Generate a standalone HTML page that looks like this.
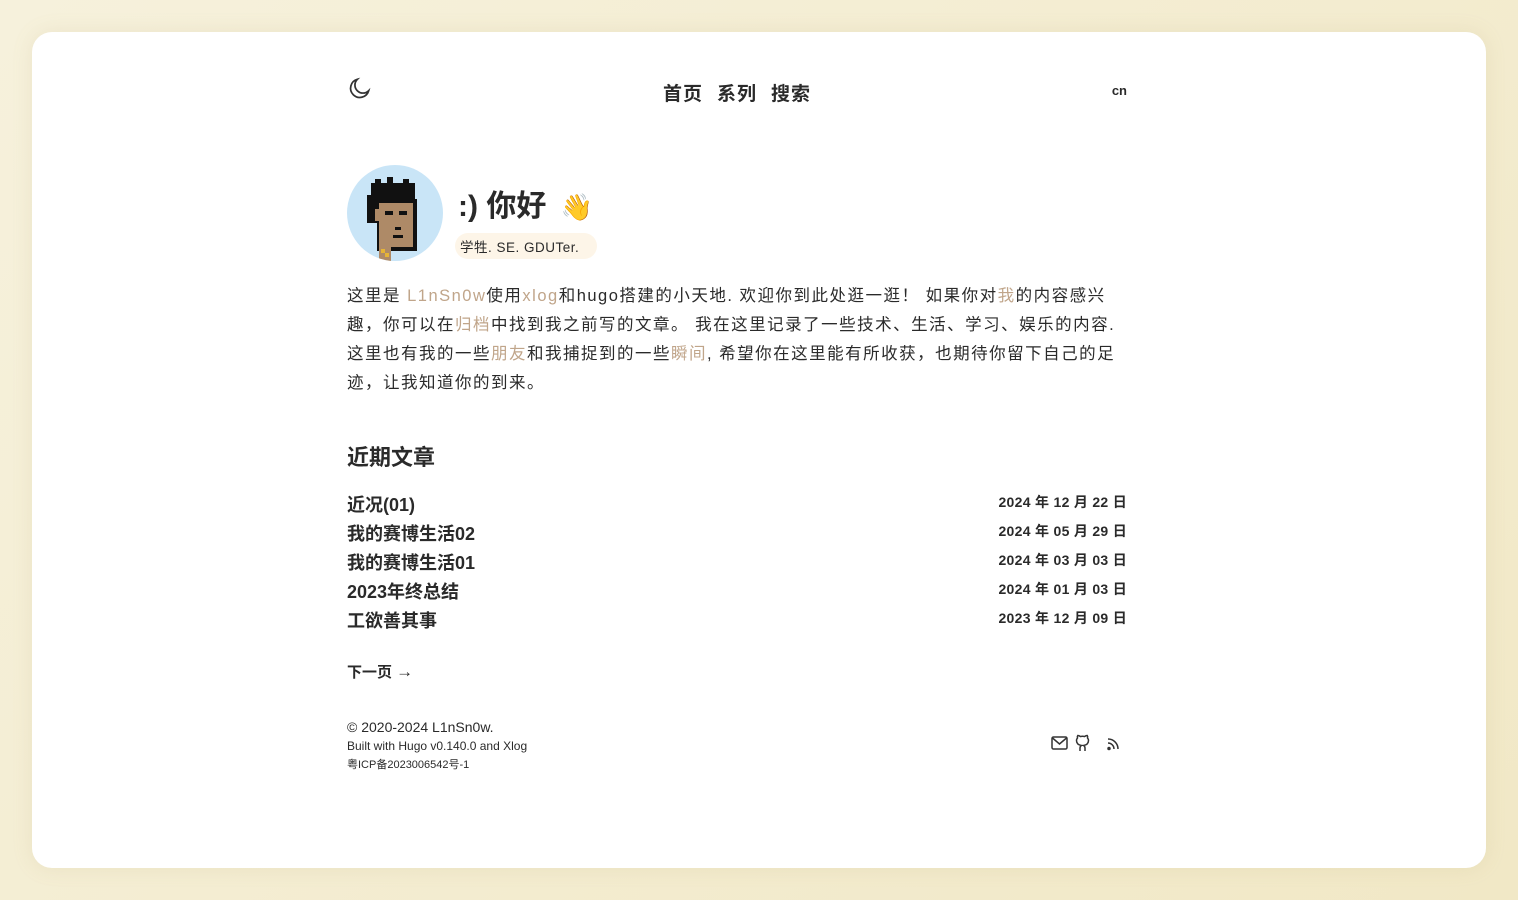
<!DOCTYPE html>
<html><head><meta charset="utf-8"><style>
*{margin:0;padding:0;box-sizing:border-box}
html,body{width:1518px;height:900px;overflow:hidden}
body{background:linear-gradient(135deg,#f6f1dc,#f1e8c6);font-family:"Liberation Sans","Noto Sans CJK SC",sans-serif;color:#2a2a2a;position:relative}
.card{position:absolute;left:32px;top:32px;width:1454px;height:836px;background:#fff;border-radius:20px;box-shadow:0 0 20px rgba(180,160,100,.15)}
.col{position:absolute;left:347px;width:780px}
a{color:#c0a58a;text-decoration:none}
.nav{top:74px;height:36px}
.nav .links{position:absolute;left:316px;top:5px;font-size:19px;font-weight:bold;letter-spacing:1px}
.nav .links span{margin-right:14px}
.cn{position:absolute;right:0;top:9px;font-size:13px;font-weight:bold}
.intro{top:282px;font-size:16.5px;line-height:29px;white-space:nowrap;letter-spacing:1.5px}
h2{position:absolute;left:347px;top:440px;font-size:22px;font-weight:bold}
.posts{top:491px}
.row{display:flex;justify-content:space-between;height:29px;font-size:18px;font-weight:bold}
.row .d{font-size:14px;letter-spacing:.3px;padding-top:1px}
.next{top:661px;font-size:15px;font-weight:bold}
.foot{top:717px;font-size:14px;line-height:20px}
.foot small{display:block;font-size:12px;line-height:19px}
</style></head><body>
<div class="card"></div>
<div class="col nav">
<svg style="position:absolute;left:0;top:1px" width="26" height="26" viewBox="0 0 24 24" fill="none" stroke="#333" stroke-width="1.6"><path d="M20 14.5A8.5 8.5 0 1 1 9.5 4a7 7 0 0 0 10.5 10.5z"/></svg>
<div class="links"><span>首页</span><span>系列</span><span>搜索</span></div>
<div class="cn">cn</div>
</div>
<svg style="position:absolute;left:347px;top:165px" width="96" height="96" viewBox="0 0 96 96">
<circle cx="48" cy="48" r="48" fill="#c9e5f7"/>
<clipPath id="c"><circle cx="48" cy="48" r="48"/></clipPath>
<g clip-path="url(#c)">
<rect x="24" y="18" width="44" height="16" fill="#111"/>
<rect x="28" y="14" width="6" height="6" fill="#111"/><rect x="40" y="12" width="6" height="8" fill="#111"/><rect x="56" y="14" width="6" height="6" fill="#111"/>
<rect x="20" y="30" width="12" height="28" fill="#111"/>
<rect x="30" y="34" width="40" height="52" fill="#111"/>
<rect x="32" y="38" width="34" height="44" fill="#ae8a67"/>
<rect x="28" y="44" width="6" height="12" fill="#ae8a67"/>
<rect x="32" y="80" width="12" height="16" fill="#ae8a67"/>
<rect x="38" y="46" width="8" height="4" fill="#111"/><rect x="52" y="46" width="8" height="4" fill="#111"/>
<rect x="48" y="62" width="6" height="3" fill="#111"/><rect x="46" y="70" width="10" height="3" fill="#111"/>
<rect x="34" y="84" width="4" height="4" fill="#e6b436"/><rect x="38" y="88" width="4" height="4" fill="#e6b436"/>
</g></svg>
<div style="position:absolute;left:458px;top:181px;font-size:30px;font-weight:bold">:) 你好 <span style="font-size:26px;margin-left:6px">👋</span></div>
<div style="position:absolute;left:455px;top:233px;background:#fdf5e8;border-radius:14px;padding:3px 18px 3px 5px;font-size:13.5px;letter-spacing:.5px">学牲. SE. GDUTer.</div>
<div class="col intro">这里是 <a>L1nSn0w</a>使用<a>xlog</a>和hugo搭建的小天地. 欢迎你到此处逛一逛！ 如果你对<a>我</a>的内容感兴<br>趣，你可以在<a>归档</a>中找到我之前写的文章。 我在这里记录了一些技术、生活、学习、娱乐的内容.<br>这里也有我的一些<a>朋友</a>和我捕捉到的一些<a>瞬间</a>, 希望你在这里能有所收获，也期待你留下自己的足<br>迹，让我知道你的到来。</div>
<h2>近期文章</h2>
<div class="col posts">
<div class="row"><span>近况(01)</span><span class="d">2024 年 12 月 22 日</span></div>
<div class="row"><span>我的赛博生活02</span><span class="d">2024 年 05 月 29 日</span></div>
<div class="row"><span>我的赛博生活01</span><span class="d">2024 年 03 月 03 日</span></div>
<div class="row"><span>2023年终总结</span><span class="d">2024 年 01 月 03 日</span></div>
<div class="row"><span>工欲善其事</span><span class="d">2023 年 12 月 09 日</span></div>
</div>
<div class="col next">下一页 <span style="font-size:17px">→</span></div>
<div class="col foot">© 2020-2024 L1nSn0w.<small>Built with Hugo v0.140.0 and Xlog</small><small style="font-size:11px;line-height:19px">粤ICP备2023006542号-1</small>
<svg style="position:absolute;right:2px;top:16px" width="74" height="20" viewBox="0 0 74 20" fill="none" stroke="#333" stroke-width="1.5">
<rect x="1" y="4" width="15" height="12" rx="1.5"/><path d="M1.5 5l7 6 7-6"/>
<path d="M34 18v-3c0-1-.5-2-1.5-2.5 3-.5 5-2 5-5 0-1-.5-2-1-2.5.2-1 .1-2-.3-2.5-1 0-2 .6-2.6 1a8 8 0 0 0-4.2 0c-.6-.4-1.6-1-2.6-1-.4.5-.5 1.5-.3 2.5-.5.5-1 1.5-1 2.5 0 3 2 4.5 5 5-1 .5-1.5 1.5-1.5 2.5v3"/>
<path d="M57 6a10 10 0 0 1 10 10M57 10a6 6 0 0 1 6 6"/><circle cx="58" cy="15.5" r="1" fill="#333"/>
</svg></div>
</body></html>
